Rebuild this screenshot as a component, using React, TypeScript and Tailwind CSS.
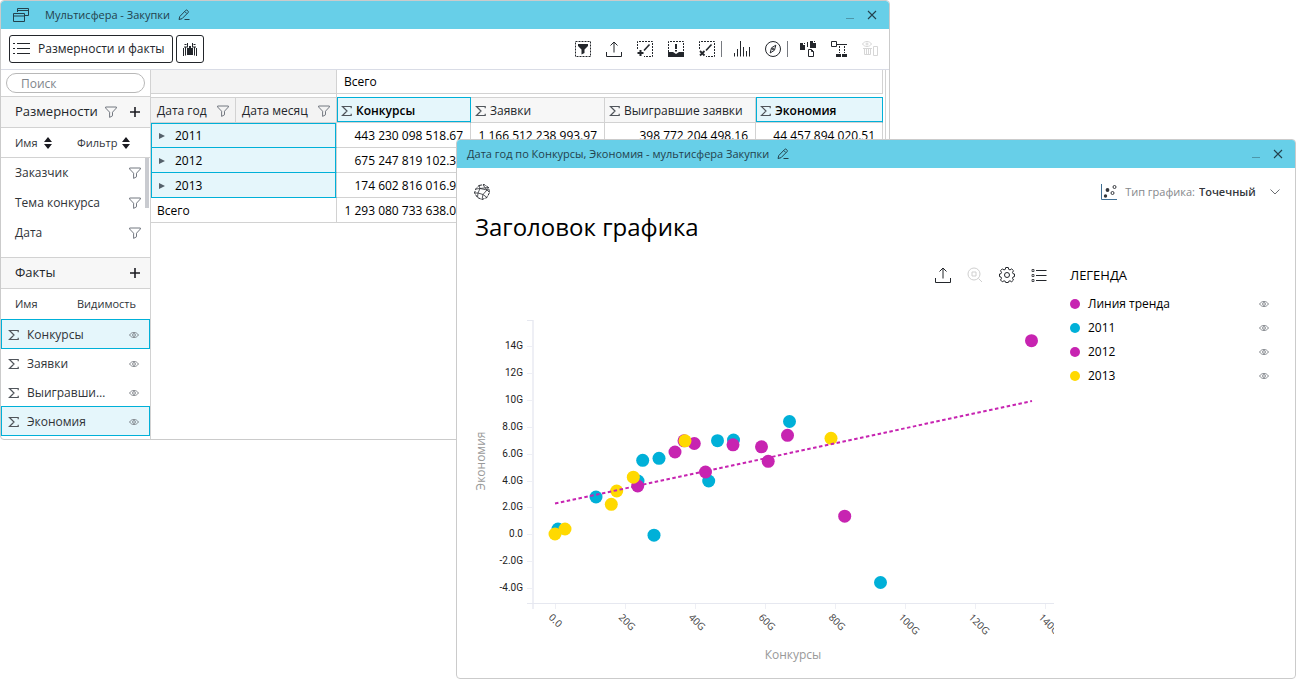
import type { ReactNode } from "react"
import clsx from "clsx"

const dimensions = ["Заказчик", "Тема конкурса", "Дата"]

const facts = [
  { name: "Конкурсы", selected: true },
  { name: "Заявки", selected: false },
  { name: "Выигравшие заявки", selected: false },
  { name: "Экономия", selected: true },
]

const years = [
  { year: "2011", values: ["443 230 098 518.67", "1 166 512 238 993.97", "398 772 204 498.16", "44 457 894 020.51"] },
  { year: "2012", values: ["675 247 819 102.31", "", "", ""] },
  { year: "2013", values: ["174 602 816 016.96", "", "", ""] },
]

const totals = ["1 293 080 733 638.04", "", "", ""]

const legend = [
  { name: "Линия тренда", color: "bg-[#c724b1]" },
  { name: "2011", color: "bg-[#00b0d8]" },
  { name: "2012", color: "bg-[#c724b1]" },
  { name: "2013", color: "bg-[#ffd900]" },
]

const series = [
  {
    color: "#00b0d8",
    points: [
      [558, 529], [596, 497], [638, 481], [642.7, 460.3], [654, 535.2], [659, 458.3],
      [708.7, 481], [717.5, 440.7], [733.5, 440], [789.5, 421.5], [880.5, 582.5],
    ],
  },
  {
    color: "#c724b1",
    points: [
      [637.7, 486], [675, 452], [684, 440.8], [694.3, 443.5], [705.5, 472], [733, 444.8],
      [761.5, 446.8], [768.2, 461.3], [787.5, 435.3], [844.7, 516.2], [1031.5, 340.7],
    ],
  },
  {
    color: "#ffd900",
    points: [[555, 534], [565, 529], [611.3, 504.3], [616.7, 491], [633.3, 477.2], [685, 440.8], [831, 438.3]],
  },
]

const yTicks = ["14G", "12G", "10G", "8.0G", "6.0G", "4.0G", "2.0G", "0.0", "-2.0G", "-4.0G"]
const xTicks = ["0.0", "20G", "40G", "60G", "80G", "100G", "120G", "140G"]

function Icon({ size = 16, className, children }: { size?: number; className?: string; children: ReactNode }) {
  return (
    <svg
      width={size}
      height={size}
      viewBox={`0 0 ${size} ${size}`}
      fill="none"
      stroke="currentColor"
      className={clsx("block shrink-0", className)}
      aria-hidden="true"
    >
      {children}
    </svg>
  )
}

function IconButton({ label, className, children }: { label: string; className?: string; children: ReactNode }) {
  return (
    <button type="button" aria-label={label} className={clsx("shrink-0", className)}>
      {children}
    </button>
  )
}

const Pencil = () => (
  <Icon size={12}>
    <path d="M1 10.5l.8-3L7.8 1.3a1 1 0 0 1 1.4 0l.9.9a1 1 0 0 1 0 1.4L4 9.7z M6.8 2.5l2 2 M6.5 10.5h5" />
  </Icon>
)

const Funnel = () => (
  <Icon size={12} className="text-[#737880]">
    <path d="M.6 1h10.8v1L7.5 6.2v3.6L4.6 11.4V6.2L.6 2z" />
  </Icon>
)

const Plus = () => (
  <Icon size={10} className="text-[#1c1c22]">
    <path d="M5 0v10M0 5h10" strokeWidth="1.6" />
  </Icon>
)

const Sorter = () => (
  <Icon size={12} className="text-[#1c1c22]">
    <path d="M6 0l4 5H2zM6 12l4-5H2z" fill="currentColor" stroke="none" />
  </Icon>
)

const Sigma = () => (
  <Icon size={12} className="text-[#50555b]">
    <path d="M10.2 3.2V1.5H1.5L6 6 1.5 10.5h8.7V8.8" strokeWidth="1.2" />
  </Icon>
)

const Eye = () => (
  <Icon size={10} className="text-[#6b7076]">
    <path d="M.5 5C1.8 3.2 3.2 2.5 5 2.5S8.2 3.2 9.5 5C8.2 6.8 6.8 7.5 5 7.5S1.8 6.8.5 5z" strokeWidth=".8" />
    <circle cx="5" cy="5" r="1.4" strokeWidth=".8" />
  </Icon>
)

const Share = () => (
  <Icon>
    <path d="M8 11.5V1M4.5 4.5L8 1l3.5 3.5M.5 11v4.5h15V11" />
  </Icon>
)

function TitleBar({ title, icon }: { title: string; icon?: ReactNode }) {
  return (
    <header className="flex h-7 items-center rounded-t-[3px] bg-[#67cfe8] text-[#23424d]">
      {icon}
      <h1 className="text-[11px]">{title}</h1>
      <IconButton label="Переименовать" className="ml-2">
        <Pencil />
      </IconButton>
      <IconButton label="Свернуть" className="mr-3 ml-auto text-[#4d97aa]">
        <Icon size={9}>
          <path d="M0 7.5h8" />
        </Icon>
      </IconButton>
      <IconButton label="Закрыть" className="mr-3">
        <Icon size={10}>
          <path d="M1 1l8 8M9 1l-8 8" strokeWidth="1.1" />
        </Icon>
      </IconButton>
    </header>
  )
}

function Toolbar() {
  return (
    <div className="flex h-[41px] items-center border-b border-[#d9dce6] pr-[11px] pb-px pl-2 text-[#23262b]">
      <button type="button" className="flex h-7 items-center gap-2 rounded-[3px] border border-[#23262b] px-[3px] pr-[7px] text-[12px]">
        <Icon size={17}>
          <path d="M4 3.5h13M4 8.5h13M4 13.5h13M0 3.5h2M0 8.5h2M0 13.5h2" />
        </Icon>
        Размерности и факты
      </button>
      <button type="button" aria-label="Поиск по данным" className="ml-[3px] flex h-7 w-7 items-center justify-center rounded-[3px] border border-[#23262b]">
        <Icon size={14}>
          <path d="M4 6h6v7H4z" fill="currentColor" stroke="none" />
          <path d="M.5 6v8M2.5 5v8.500M11.5 5v8.500M13.5 6v8M4.500 1v4.500M9.500 1v4.500M1.500 2.500h2M10.500 2.500h2M6.500 4v3M7.500 4v3M1 5h3M10 5h3" />
        </Icon>
      </button>

      <div className="ml-auto flex items-center gap-[15px]">
        <IconButton label="Фильтр">
          <Icon>
            <path d="M.5.5h15v15H.5z" strokeDasharray="2 1" />
            <path d="M3 3h10v2L9.5 8.5V12l-3 1.5v-5L3 5z" fill="currentColor" stroke="none" />
          </Icon>
        </IconButton>
        <IconButton label="Экспорт"><Share /></IconButton>
        <IconButton label="Добавить поле">
          <Icon>
            <path d="M.5 8V.5h15v15H7" strokeDasharray="2 1" />
            <path d="M12.5 3.5L7 9.5" strokeWidth="1.6" />
            <path d="M3.5 9v6M.5 12h6" strokeWidth="2" />
          </Icon>
        </IconButton>
        <IconButton label="Показать поле">
          <Icon>
            <path d="M.5 11V.5h15V11" strokeDasharray="2 1" />
            <path d="M8 3v5M8 9v1.5" strokeWidth="2" />
            <path d="M0 11h5l3 2 3-2h5v5H0z" fill="currentColor" stroke="none" />
          </Icon>
        </IconButton>
        <IconButton label="Удалить поле">
          <Icon>
            <path d="M.5 8V.5h15v15H7" strokeDasharray="2 1" />
            <path d="M12.5 3.5L7 9.5" strokeWidth="1.6" />
            <path d="M1 10l4.5 4.5M5.5 10L1 14.5" strokeWidth="1.8" />
          </Icon>
        </IconButton>
      </div>
      <span className="mr-3 ml-1.5 h-4 w-px bg-[#777a80]" />
      <div className="flex items-center gap-[15px]">
        <IconButton label="График">
          <Icon>
            <path d="M.5 12v3.5M3.5 8v7.5M6.5 0v15.5M9.5 6v9.5M12.5 10v5.5M15.5 6v9.5" />
          </Icon>
        </IconButton>
        <IconButton label="Навигатор">
          <Icon>
            <circle cx="8" cy="8" r="7.5" />
            <path d="M10.8 4.2L9.5 9.2 5.2 12l1.3-5.2z" />
            <circle cx="8" cy="8" r=".8" />
          </Icon>
        </IconButton>
      </div>
      <span className="mr-3 ml-1.5 h-4 w-px bg-[#777a80]" />
      <div className="flex items-center gap-[15px]">
        <IconButton label="Копировать">
          <Icon>
            <path d="M0 2h3v2h2v5H0zM10 0h3v2h3v5h-6z" fill="currentColor" stroke="none" />
            <path d="M8.5 8.5h3l2 2v5h-5zM11.500 8.500v2h2M7.500 1v5M4.500 2v1M14.500 0v1" />
          </Icon>
        </IconButton>
        <IconButton label="Структура">
          <Icon>
            <path d="M.5.5h5v5h-5zM5.5 3.5H16" />
            <path d="M8.500 5v7M13.500 5v7" strokeDasharray="2 1" />
            <path d="M5 13h5v3H5zM11 13h5v3h-5z" fill="currentColor" stroke="none" />
          </Icon>
        </IconButton>
        <IconButton label="Очистить" className="text-[#d6d6d6]">
          <Icon>
            <path d="M.5 3c2-3.300 7-3.300 9 0-2 3.300-7 3.300-9 0zM1 7.500h9M2.500 7.500v6h6v-6M4.500 8v5M6.500 8v5M11.500 5.500h4v9h-4z" />
            <circle cx="5" cy="3" r="1" />
          </Icon>
        </IconButton>
      </div>
    </div>
  )
}

function SectionHeader({ title, filter }: { title: string; filter?: boolean }) {
  return (
    <div className="flex h-8 items-center border-y border-[#d2d2d2] bg-[#f7f7f7] pr-[10px] pl-[14px] text-[#23262b]">
      <h2 className="text-[13px] font-medium">{title}</h2>
      {filter && (
        <IconButton label="Фильтр размерностей" className="ml-auto">
          <Funnel />
        </IconButton>
      )}
      <IconButton label="Добавить" className={filter ? "ml-[13px]" : "ml-auto"}>
        <Plus />
      </IconButton>
    </div>
  )
}

function Sidebar() {
  return (
    <aside className="w-[150px] shrink-0 border-r border-[#d2d2d2] pb-[3px] text-[12px] text-[#2f3338]">
      <div className="px-[5px] py-[3px]">
        <input
          type="search"
          aria-label="Поиск"
          placeholder="Поиск"
          className="block h-5 w-full rounded-full border border-[#b8b8b8] px-[14px] text-[12px] outline-none placeholder:text-[#7f858c]"
        />
      </div>

      <SectionHeader title="Размерности" filter />
      <div className="flex h-[30px] items-center border-b border-[#d2d2d2] pt-px pl-[14px] text-[11px] font-medium">
        <button type="button" className="flex w-[62px] items-center gap-1">Имя <Sorter /></button>
        <button type="button" className="flex items-center gap-[3px]">Фильтр <Sorter /></button>
      </div>
      <div className="flex h-[99px]">
        <ul className="flex-1">
          {dimensions.map((name) => (
            <li key={name} className="flex h-[30px] items-center justify-between pr-1 pl-[14px]">
              {name}
              <IconButton label={`Фильтр: ${name}`}><Funnel /></IconButton>
            </li>
          ))}
        </ul>
        <div className="mr-px h-[50px] w-1 bg-[#c9cbd0]" />
      </div>

      <SectionHeader title="Факты" />
      <div className="flex h-[30px] items-center pt-px pl-[14px] text-[11px] font-medium">
        <span className="w-[62px]">Имя</span>
        <span>Видимость</span>
      </div>
      <ul>
        {facts.map((fact) => (
          <li
            key={fact.name}
            className={clsx(
              "flex h-[30px] items-center border pt-px pr-[10px] pl-[6px] not-first:-mt-px",
              fact.selected ? "border-[#00b0d8] bg-[#e5f6fb]" : "border-transparent",
            )}
          >
            <Sigma />
            <span className="ml-[7px] w-20 truncate">{fact.name}</span>
            <IconButton label={`Видимость: ${fact.name}`} className="ml-auto"><Eye /></IconButton>
          </li>
        ))}
      </ul>
    </aside>
  )
}

function DataTable() {
  return (
    <div className="mr-[3px] flex-1 border-r border-[#d2d2d2]">
      <table className="w-[732px] table-fixed border-separate border-spacing-0 text-[12px] text-black">
        <colgroup>
          <col className="w-[85px]" />
          <col className="w-[101px]" />
          <col className="w-[134px]" />
          <col className="w-[134px]" />
          <col className="w-[151px]" />
          <col className="w-[127px]" />
        </colgroup>
        <thead>
          <tr className="h-6">
            <td colSpan={2} className="border-r border-b border-[#d2d2d2] bg-[#f3f3f3] p-0" />
            <th colSpan={4} className="border-r border-b border-[#d2d2d2] px-[7px] py-0 text-left font-normal">Всего</th>
          </tr>
          <tr className="h-[3px]">
            <td colSpan={2} className="border-r border-[#d2d2d2] p-0" />
            <td colSpan={4} className="p-0" />
          </tr>
          <tr className="h-[26px] text-left text-[#23262b]">
            {["Дата год", "Дата месяц"].map((name) => (
              <th key={name} className="border-y border-r border-[#d2d2d2] bg-[#f3f3f3] pt-px pr-[6px] pb-0 pl-[6px] font-medium">
                <div className="flex items-center justify-between whitespace-nowrap">
                  {name}
                  <IconButton label={`Фильтр: ${name}`}><Funnel /></IconButton>
                </div>
              </th>
            ))}
            {facts.map((fact) => (
              <th
                key={fact.name}
                className={clsx(
                  "border-r border-b border-b-[#d2d2d2] px-1 pb-0",
                  fact.selected
                    ? "border-r-[#00b0d8] bg-[#e5f6fb] pt-[2px] font-semibold text-black shadow-[inset_1px_1px_0_#00b0d8,inset_0_-1px_0_#00b0d8]"
                    : "border-t border-t-[#d2d2d2] border-r-[#d2d2d2] bg-[#f7f7f7] pt-px font-medium",
                )}
              >
                <div className="flex items-center gap-[3px] whitespace-nowrap"><Sigma /> {fact.name}</div>
              </th>
            ))}
          </tr>
        </thead>
        <tbody>
          {years.map((row, i) => (
            <tr key={row.year} className="h-[25px]">
              <th
                colSpan={2}
                className={clsx(
                  "border-r border-b border-r-[#d2d2d2] border-b-[#00b0d8] bg-[#e5f6fb] px-2 pt-[2px] pb-0 text-left font-medium",
                  i === 0
                    ? "shadow-[inset_1px_1px_0_#00b0d8,inset_-1px_0_0_#00b0d8]"
                    : "shadow-[inset_1px_0_0_#00b0d8,inset_-1px_0_0_#00b0d8]",
                )}
              >
                <button type="button" className="flex items-center gap-[10px]">
                  <Icon size={6} className="text-[#55616b]">
                    <path d="M0 0l6 3-6 3z" fill="currentColor" stroke="none" />
                  </Icon>
                  {row.year}
                </button>
              </th>
              {row.values.map((value, col) => (
                <td key={col} className="border-r border-b border-[#d2d2d2] pt-[2px] pr-[7px] pb-0 pl-0 text-right whitespace-nowrap">{value}</td>
              ))}
            </tr>
          ))}
          <tr className="h-[25px]">
            <th colSpan={2} className="border-r border-b border-[#d2d2d2] px-[6px] pt-[2px] pb-0 text-left font-normal">Всего</th>
            {totals.map((value, col) => (
              <td key={col} className="border-r border-b border-[#d2d2d2] pt-[2px] pr-[7px] pb-0 pl-0 text-right whitespace-nowrap">{value}</td>
            ))}
          </tr>
        </tbody>
      </table>
    </div>
  )
}

function ScatterChart() {
  return (
    <svg viewBox="457 310 597 355" className="block w-full" role="img" aria-label="Экономия по Конкурсы">
      <g stroke="#e6e8f0" strokeWidth="1">
        <path d="M533 320v289" strokeWidth="2" stroke="#eeeff5" />
        <path d="M527 320.5h6M527 603.5h527" />
        {yTicks.map((tick, i) => (
          <path key={tick} d={`M527 ${346 + Math.round(i * 26.9)}.5h6`} stroke="#eeeff5" />
        ))}
        {xTicks.map((tick, i) => (
          <path key={tick} d={`M${555 + i * 70}.5 604v5`} stroke="#eeeff5" />
        ))}
      </g>
      <g fontSize="10" fill="#222" className="font-['Roboto',sans-serif]">
        {yTicks.map((tick, i) => (
          <text key={tick} x="523" y={349 + Math.round(i * 26.9)} textAnchor="end">{tick}</text>
        ))}
      </g>
      <g fontSize="10" fill="#444">
        {xTicks.map((tick, i) => (
          <text key={tick} transform={`translate(${548 + i * 70} 618) rotate(45)`}>{tick}</text>
        ))}
      </g>
      <g fontSize="12" fill="#999" textAnchor="middle">
        <text x="793" y="659">Конкурсы</text>
        <text transform="translate(485 461) rotate(-90)">Экономия</text>
      </g>
      {series.map((s) => (
        <g key={s.color} fill={s.color}>
          {s.points.map(([x, y]) => (
            <circle key={`${x}-${y}`} cx={x} cy={y} r="6.5" />
          ))}
        </g>
      ))}
      <path d="M555 503.5L1032 401" stroke="#c724b1" strokeWidth="2" strokeDasharray="3.5 2.5" />
    </svg>
  )
}

function ChartWindow() {
  return (
    <section className="absolute top-[139px] right-0 bottom-0 left-[456px] rounded border border-[#cbcbcb] bg-white">
      <TitleBar title="Дата год по Конкурсы, Экономия - мультисфера Закупки" icon={<span className="w-[10px]" />} />
      <div className="flex h-12 items-center pr-[15px] pl-[17px]">
        <IconButton label="Сфера" className="text-[#2b2d33]">
          <Icon>
            <path d="M5 1.5l5-1 4.500 3 1 5-2.500 5-5 2-4.500-2L.5 9 2 4.500z" strokeDasharray="3 1" />
            <path d="M2 5l4-.5L14.500 3.500M6 4.500L5 1.500M6 4.500L4 9l5 1.500 4-4.500-7-1.500M13 6l2.500 2.500M9 10.500l4 3M9 10.500L8 15.500M4 9L.5 9M4 9l-.5 4.500M13 6l1.500-2.500M9 1l4 5" strokeWidth=".8" />
          </Icon>
        </IconButton>
        <div className="relative ml-auto flex items-center text-[11px]">
          <Icon className="mr-2 text-[#34373c]">
            <path d="M.5 0v15.5H16" stroke="#3f6f94" />
            <circle cx="4.5" cy="12" r="1.7" fill="currentColor" stroke="none" />
            <circle cx="6.5" cy="6" r="1.9" fill="currentColor" stroke="none" />
            <circle cx="11.5" cy="9" r="1.5" />
            <circle cx="13.5" cy="3" r="1.5" />
          </Icon>
          <label htmlFor="chart-type" className="text-[#85888c]">Тип графика:</label>
          <select id="chart-type" className="appearance-none bg-transparent pr-6 pl-1 font-semibold text-[#33363b] outline-none">
            <option>Точечный</option>
          </select>
          <Icon size={10} className="pointer-events-none absolute right-0 text-[#6b6e72]">
            <path d="M.5 2.5L5 7l4.500-4.500" />
          </Icon>
        </div>
      </div>
      <h2 className="-mt-px mb-px pl-[18px] text-2xl leading-6 text-black">Заголовок графика</h2>

      <div className="flex">
        <div className="min-w-0 flex-1 pr-4">
          <div className="flex h-[70px] items-center justify-end gap-4 pr-[7px] text-[#23262b]">
            <IconButton label="Экспорт графика"><Share /></IconButton>
            <IconButton label="Масштаб" className="text-[#cfcfcf]">
              <Icon>
                <circle cx="7" cy="7" r="6" />
                <path d="M5 5h4v4H5zM11.5 11.5L15 15" />
              </Icon>
            </IconButton>
            <IconButton label="Настройки">
              <Icon>
                <path d="M6.7.5h2.600l.4 1.900 1.300.5 1.700-1 1.800 1.800-1 1.700.5 1.300 1.500.3v2.600l-1.500.4-.5 1.300 1 1.700-1.800 1.800-1.700-1-1.300.5-.4 1.200H6.700l-.4-1.200-1.300-.5-1.700 1-1.800-1.800 1-1.700-.5-1.300-1.500-.4V7l1.500-.3.5-1.300-1-1.700 1.800-1.800 1.700 1 1.300-.5z" />
                <circle cx="8" cy="8" r="2.5" />
              </Icon>
            </IconButton>
            <IconButton label="Список">
              <Icon>
                <path d="M5 3.5h10.5M5 8.5h10.5M5 13.5h10.5" />
                <path d="M1 2.500h2v2H1zM1 7.500h2v2H1zM1 12.500h2v2H1z" strokeWidth=".8" />
              </Icon>
            </IconButton>
          </div>
          <ScatterChart />
        </div>
        <aside className="w-[225px] shrink-0 pt-[27px] pr-[26px] text-black">
          <h3 className="text-[13px] leading-4 font-medium">ЛЕГЕНДА</h3>
          <ul className="mt-[9px] text-[12px]">
            {legend.map((item) => (
              <li key={item.name} className="flex h-6 items-center">
                <span className={clsx("mr-2 h-[10px] w-[10px] rounded-full", item.color)} />
                {item.name}
                <IconButton label={`Видимость: ${item.name}`} className="ml-auto"><Eye /></IconButton>
              </li>
            ))}
          </ul>
        </aside>
      </div>
    </section>
  )
}

export default function App() {
  return (
    <main className="relative min-h-screen bg-white font-['Open_Sans','Noto_Sans',sans-serif]">
      <section className="mr-[406px] overflow-hidden rounded border border-[#cbcbcb] bg-white">
        <TitleBar
          title="Мультисфера - Закупки"
          icon={
            <Icon className="mr-4 ml-3">
              <path d="M4.5 5V1.5h11v7H12M4.5 3.5h11M.5 6.5h11v8H.5zM.5 9h11" />
            </Icon>
          }
        />
        <Toolbar />
        <div className="flex">
          <Sidebar />
          <DataTable />
        </div>
      </section>
      <ChartWindow />
    </main>
  )
}
